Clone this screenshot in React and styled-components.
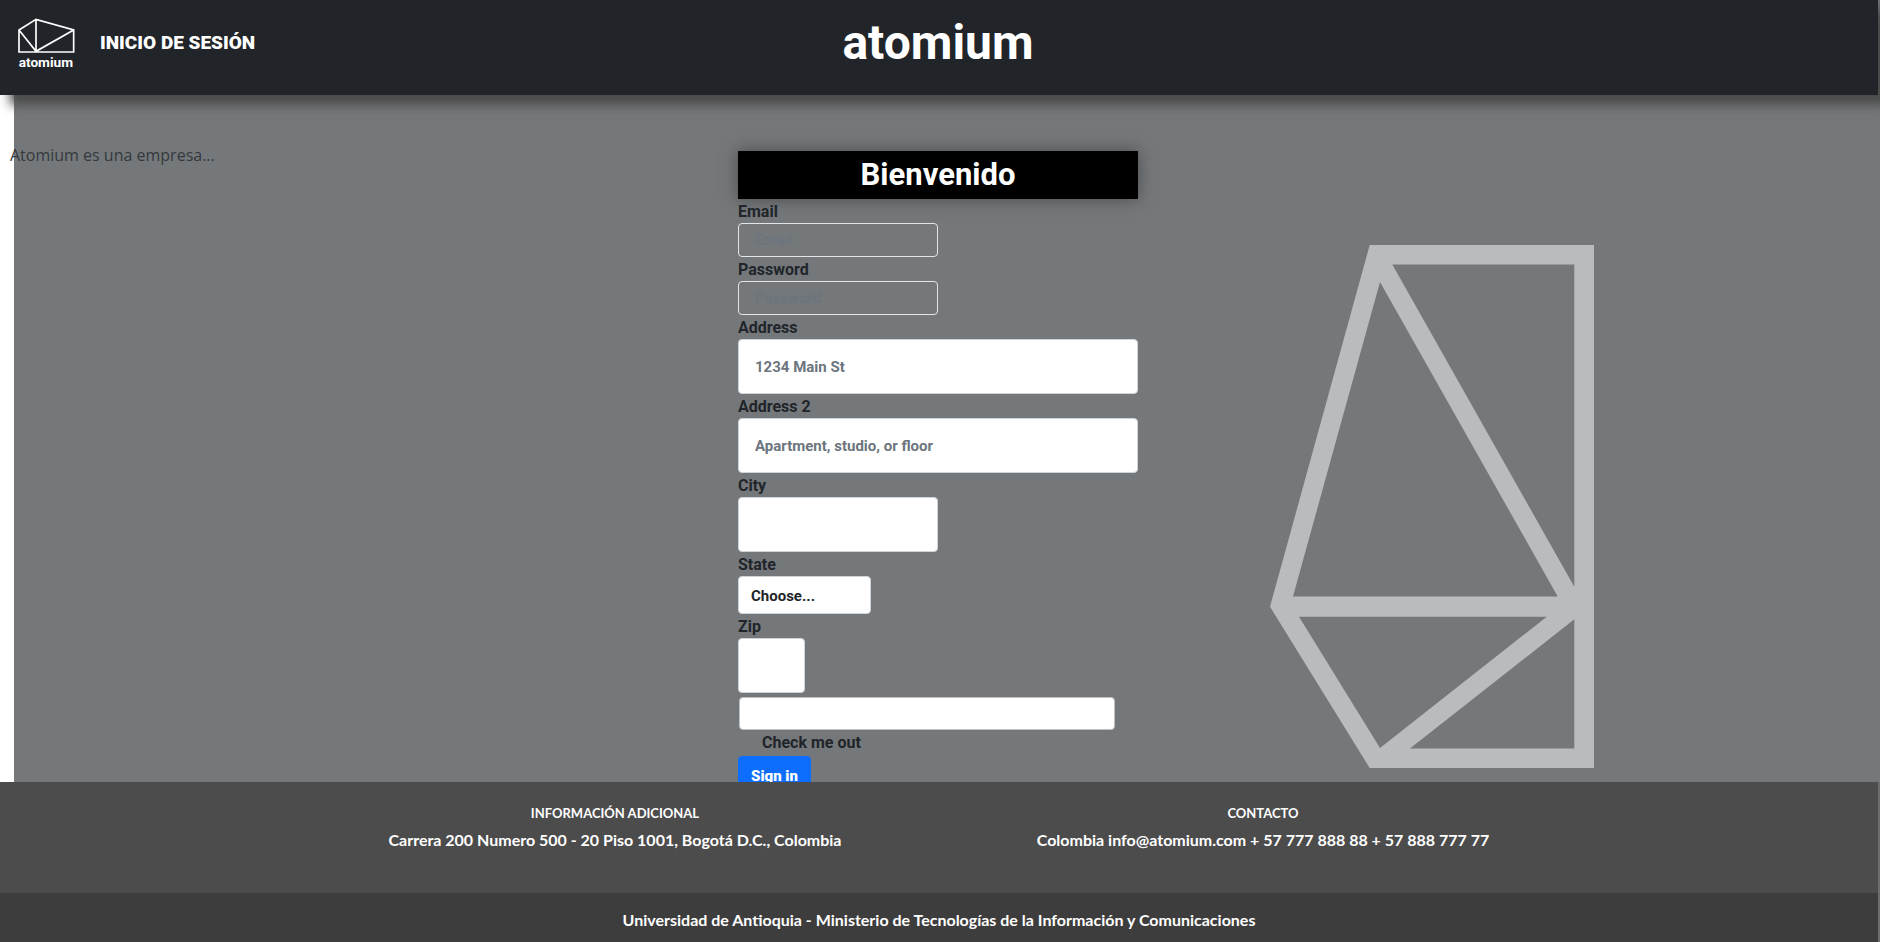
import React from "react";
import styled, { createGlobalStyle } from "styled-components";

const display = `Roboto, "Liberation Sans", sans-serif`;

const GlobalStyle = createGlobalStyle`
  *, *::before, *::after { box-sizing: border-box; }
  body {
    margin: 0;
    background: #6b6e71;
    color: #212529;
    font: 16px/24px "Open Sans", sans-serif;
  }
`;

const Page = styled.div`
  display: flex;
  flex-direction: column;
  height: 100vh;
  overflow: hidden;
`;

const Header = styled.header`
  position: relative;
  z-index: 1;
  display: grid;
  grid-template-columns: 1fr auto 1fr;
  align-items: start;
  height: 95px;
  margin-right: 2px;
  padding: 16px 20px 16px 18px;
  background: #212529;
  color: #fff;
  font-family: ${display};
  box-shadow: 10px 10px 10px #4b4b4b;
  flex: none;
`;

const Nav = styled.nav`
  display: flex;
  align-items: start;
  gap: 22px;
`;

const NavLink = styled.a`
  padding-top: 15px;
  color: #fff;
  font-size: 19px;
  font-weight: 900;
  text-decoration: none;
`;

const Brand = styled.h1`
  margin: 0;
  font-size: 48px;
  line-height: 54px;
  font-weight: 700;
`;

const Main = styled.main`
  flex: 1;
  min-height: 0;
  overflow: hidden;
  display: grid;
  grid-template-columns: 1fr 400px 1fr;
  align-items: start;
  padding-right: 4px;
  background: linear-gradient(to right, #fff 14px, #74787b 14px);
`;

const About = styled.p`
  margin: 0;
  padding: 48px 10px;
  color: #35393c;
`;

const Form = styled.form`
  padding-top: 56px;
  font-family: ${display};
  font-weight: 700;
`;

const FormTitle = styled.h2`
  margin: 0;
  background: #000;
  color: #fff;
  text-align: center;
  font-size: 31px;
  line-height: 48px;
  font-weight: 700;
  box-shadow: 0 0 15px #4b4b4b;
`;

const Label = styled.label`
  display: block;
  height: 24px;
  line-height: 26px;
`;

const Input = styled.input`
  display: block;
  width: ${(p) => p.$width || "100%"};
  height: ${(p) => (p.$outline ? "34px" : "55px")};
  padding: 0 16px;
  border: 1px solid ${(p) => (p.$outline ? "#e4e5e8" : "#ced4da")};
  border-radius: 4px;
  background: ${(p) => (p.$outline ? "transparent" : "#fff")};
  color: #212529;
  font: 700 15px/24px ${display};
  &::placeholder { color: #6c757d; opacity: 1; }
`;

const Select = styled.select`
  display: block;
  width: 133px;
  height: 38px;
  padding: 1px 12px 0;
  appearance: none;
  border: 1px solid #ced4da;
  border-radius: 4px;
  background: #fff;
  color: #212529;
  font: 700 15px/24px ${display};
`;

const Checkbox = styled.input`
  display: block;
  appearance: none;
  width: 376px;
  height: 33px;
  margin: 4px 1px 1px;
  border: 1px solid #bfbfbf;
  border-radius: 4px;
  background: #fff;
`;

const CheckLabel = styled(Label)`
  padding-left: 24px;
  line-height: 24px;
`;

const SubmitButton = styled.button`
  display: block;
  margin-top: 1px;
  height: 40px;
  padding: 0 12px;
  border: 1px solid #0d6efd;
  border-radius: 4px;
  background: #0d6efd;
  color: #fff;
  font: 900 15px/24px ${display};
`;

const Artwork = styled.svg`
  display: block;
  width: 324px;
  height: 523px;
  margin: 150px 0 0 132px;
`;

const Footer = styled.footer`
  flex: none;
  margin-right: 2px;
  background: #4c4c4c;
  color: #fff;
  font-family: Lato, sans-serif;
  font-weight: 700;
  text-align: center;
`;

const FooterColumns = styled.div`
  display: grid;
  grid-template-columns: 1fr 1fr;
  max-width: 1296px;
  min-height: 111px;
  margin: 0 auto;
  padding-top: 19px;
  align-content: start;
`;

const FooterTitle = styled.h3`
  margin: 0;
  font-size: 13px;
  line-height: 24px;
  font-weight: 700;
`;

const FooterText = styled.p`
  margin: 0;
  font-size: 16px;
  line-height: 30px;
`;

const FooterBar = styled.div`
  padding: 14px 0 10px;
  background: #3d3d3d;
  line-height: 25px;
`;

function Logo() {
  return (
    <svg width="60" height="56" viewBox="54 48 180 168" aria-label="atomium">
      <path
        d="M57 90 108 58 221 90V156H57ZM108 58V154M57 90 108 154 221 90"
        fill="none"
        stroke="#fff"
        strokeWidth="5"
      />
      <text x="56" y="200" fill="#fff" fontFamily="Roboto" fontWeight="700" fontSize="41">
        atomium
      </text>
    </svg>
  );
}

function Field({ id, label, ...rest }) {
  return (
    <>
      <Label htmlFor={id}>{label}</Label>
      <Input id={id} {...rest} />
    </>
  );
}

export default function App() {
  return (
    <Page>
      <GlobalStyle />
      <Header>
        <Nav>
          <Logo />
          <NavLink href="#login">INICIO DE SESIÓN</NavLink>
        </Nav>
        <Brand>atomium</Brand>
      </Header>
      <Main>
        <About>Atomium es una empresa...</About>
        <Form>
          <FormTitle>Bienvenido</FormTitle>
          <Field id="email" label="Email" type="email" placeholder="Email" $width="200px" $outline />
          <Field id="password" label="Password" type="password" placeholder="Password" $width="200px" $outline />
          <Field id="address" label="Address" placeholder="1234 Main St" />
          <Field id="address2" label="Address 2" placeholder="Apartment, studio, or floor" />
          <Field id="city" label="City" $width="200px" />
          <Label htmlFor="state">State</Label>
          <Select id="state">
            <option>Choose...</option>
          </Select>
          <Field id="zip" label="Zip" $width="67px" />
          <Checkbox id="check" type="checkbox" />
          <CheckLabel htmlFor="check">Check me out</CheckLabel>
          <SubmitButton type="submit">Sign in</SubmitButton>
        </Form>
        <Artwork viewBox="0 0 324 523" aria-hidden="true">
          <path
            fill="#babbbd"
            fillRule="evenodd"
            d="M99.7 0H324V523H99.7L0 361.8ZM122.3 19.6H304.3V341.8ZM110 37.1 287.7 351.4H23ZM29 371.8H276.7L110 502.9ZM304.3 374.3V503.6H140Z"
          />
        </Artwork>
      </Main>
      <Footer>
        <FooterColumns>
          <div>
            <FooterTitle>INFORMACIÓN ADICIONAL</FooterTitle>
            <FooterText>Carrera 200 Numero 500 - 20 Piso 1001, Bogotá D.C., Colombia</FooterText>
          </div>
          <div>
            <FooterTitle>CONTACTO</FooterTitle>
            <FooterText>Colombia info@atomium.com + 57 777 888 88 + 57 888 777 77</FooterText>
          </div>
        </FooterColumns>
        <FooterBar>
          Universidad de Antioquia - Ministerio de Tecnologías de la Información y Comunicaciones
        </FooterBar>
      </Footer>
    </Page>
  );
}
